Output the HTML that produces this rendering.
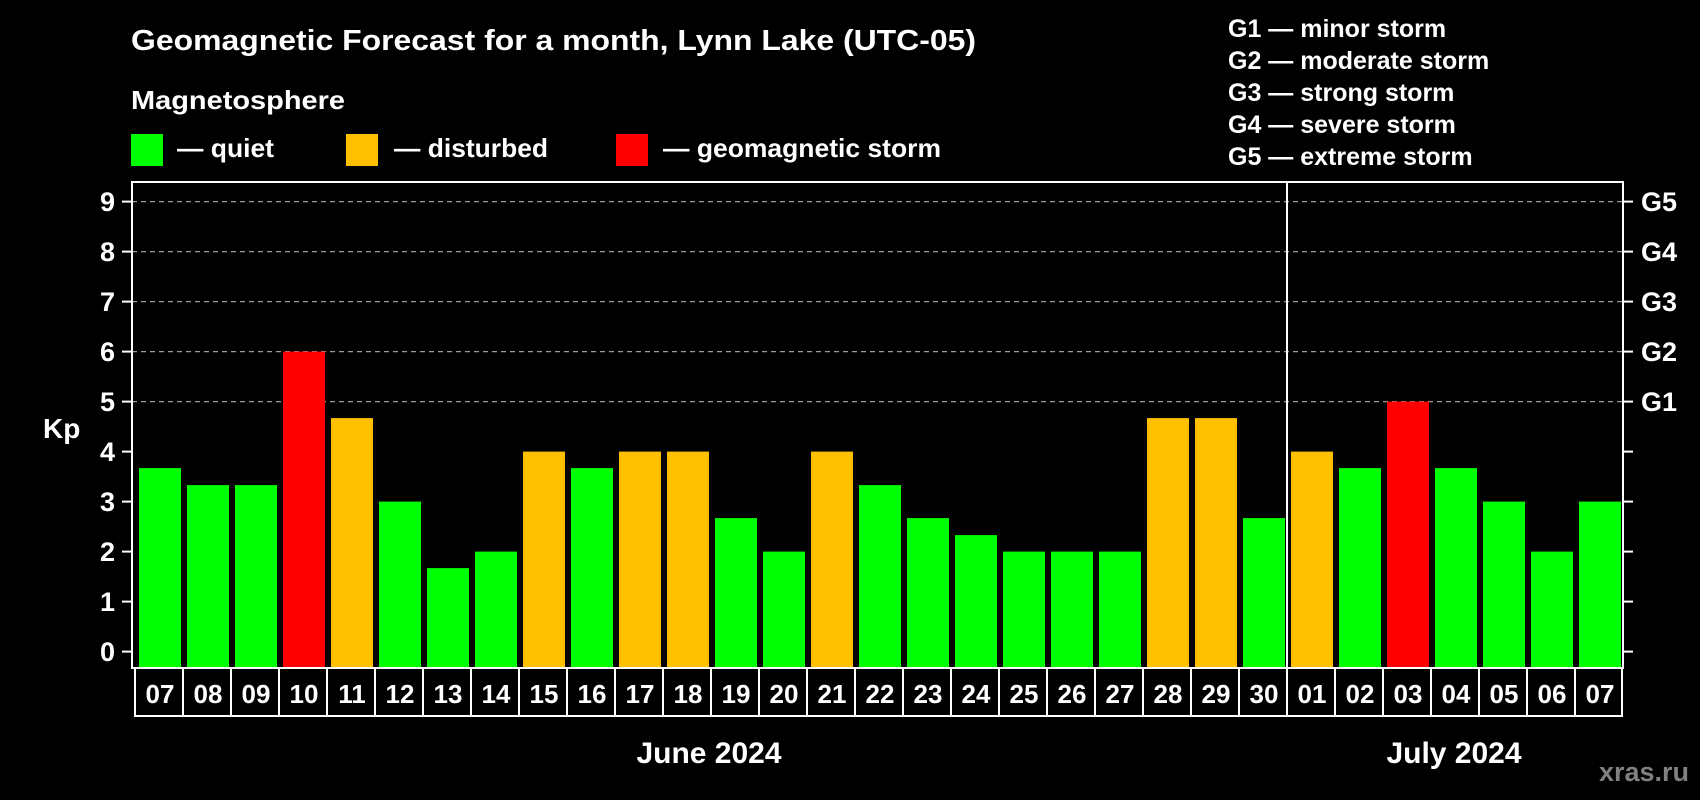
<!DOCTYPE html>
<html><head><meta charset="utf-8"><style>
html,body{margin:0;padding:0;background:#000;}
svg{display:block;font-family:"Liberation Sans",Arial,sans-serif;font-weight:bold;}
</style></head><body>
<svg width="1700" height="800" viewBox="0 0 1700 800" xmlns="http://www.w3.org/2000/svg">
<rect width="1700" height="800" fill="#000"/>
<text x="131" y="50" fill="#fff" font-size="29" textLength="845" lengthAdjust="spacingAndGlyphs">Geomagnetic Forecast for a month, Lynn Lake (UTC-05)</text>
<text x="131" y="109" fill="#fff" font-size="26" textLength="214" lengthAdjust="spacingAndGlyphs">Magnetosphere</text>
<rect x="131" y="134" width="32" height="32" fill="#00ff00"/>
<text x="177" y="157" fill="#fff" font-size="26" textLength="97" lengthAdjust="spacingAndGlyphs">— quiet</text>
<rect x="346" y="134" width="32" height="32" fill="#ffc000"/>
<text x="394" y="157" fill="#fff" font-size="26" textLength="154" lengthAdjust="spacingAndGlyphs">— disturbed</text>
<rect x="616" y="134" width="32" height="32" fill="#ff0000"/>
<text x="663" y="157" fill="#fff" font-size="26" textLength="278" lengthAdjust="spacingAndGlyphs">— geomagnetic storm</text>
<g fill="#fff" font-size="25">
<text x="1228" y="37">G1 — minor storm</text>
<text x="1228" y="69">G2 — moderate storm</text>
<text x="1228" y="101">G3 — strong storm</text>
<text x="1228" y="133">G4 — severe storm</text>
<text x="1228" y="165">G5 — extreme storm</text>
</g>
<g stroke="#999" stroke-width="1.2" stroke-dasharray="5,4">
<line x1="132" y1="201.6" x2="1623" y2="201.6"/>
<line x1="132" y1="251.6" x2="1623" y2="251.6"/>
<line x1="132" y1="301.6" x2="1623" y2="301.6"/>
<line x1="132" y1="351.6" x2="1623" y2="351.6"/>
<line x1="132" y1="401.6" x2="1623" y2="401.6"/>
</g>
<g>
<rect x="139" y="468.1" width="42" height="199.9" fill="#00ff00"/>
<rect x="187" y="485.1" width="42" height="182.9" fill="#00ff00"/>
<rect x="235" y="485.1" width="42" height="182.9" fill="#00ff00"/>
<rect x="283" y="351.6" width="42" height="316.4" fill="#ff0000"/>
<rect x="331" y="418.1" width="42" height="249.9" fill="#ffc000"/>
<rect x="379" y="501.6" width="42" height="166.4" fill="#00ff00"/>
<rect x="427" y="568.1" width="42" height="99.9" fill="#00ff00"/>
<rect x="475" y="551.6" width="42" height="116.4" fill="#00ff00"/>
<rect x="523" y="451.6" width="42" height="216.4" fill="#ffc000"/>
<rect x="571" y="468.1" width="42" height="199.9" fill="#00ff00"/>
<rect x="619" y="451.6" width="42" height="216.4" fill="#ffc000"/>
<rect x="667" y="451.6" width="42" height="216.4" fill="#ffc000"/>
<rect x="715" y="518.1" width="42" height="149.9" fill="#00ff00"/>
<rect x="763" y="551.6" width="42" height="116.4" fill="#00ff00"/>
<rect x="811" y="451.6" width="42" height="216.4" fill="#ffc000"/>
<rect x="859" y="485.1" width="42" height="182.9" fill="#00ff00"/>
<rect x="907" y="518.1" width="42" height="149.9" fill="#00ff00"/>
<rect x="955" y="535.1" width="42" height="132.9" fill="#00ff00"/>
<rect x="1003" y="551.6" width="42" height="116.4" fill="#00ff00"/>
<rect x="1051" y="551.6" width="42" height="116.4" fill="#00ff00"/>
<rect x="1099" y="551.6" width="42" height="116.4" fill="#00ff00"/>
<rect x="1147" y="418.1" width="42" height="249.9" fill="#ffc000"/>
<rect x="1195" y="418.1" width="42" height="249.9" fill="#ffc000"/>
<rect x="1243" y="518.1" width="42" height="149.9" fill="#00ff00"/>
<rect x="1291" y="451.6" width="42" height="216.4" fill="#ffc000"/>
<rect x="1339" y="468.1" width="42" height="199.9" fill="#00ff00"/>
<rect x="1387" y="401.6" width="42" height="266.4" fill="#ff0000"/>
<rect x="1435" y="468.1" width="42" height="199.9" fill="#00ff00"/>
<rect x="1483" y="501.6" width="42" height="166.4" fill="#00ff00"/>
<rect x="1531" y="551.6" width="42" height="116.4" fill="#00ff00"/>
<rect x="1579" y="501.6" width="42" height="166.4" fill="#00ff00"/>
</g>
<g fill="#fff" font-size="26" text-anchor="middle">
<text x="160" y="703">07</text><text x="208" y="703">08</text><text x="256" y="703">09</text><text x="304" y="703">10</text><text x="352" y="703">11</text><text x="400" y="703">12</text><text x="448" y="703">13</text><text x="496" y="703">14</text><text x="544" y="703">15</text><text x="592" y="703">16</text><text x="640" y="703">17</text><text x="688" y="703">18</text><text x="736" y="703">19</text><text x="784" y="703">20</text><text x="832" y="703">21</text><text x="880" y="703">22</text><text x="928" y="703">23</text><text x="976" y="703">24</text><text x="1024" y="703">25</text><text x="1072" y="703">26</text><text x="1120" y="703">27</text><text x="1168" y="703">28</text><text x="1216" y="703">29</text><text x="1264" y="703">30</text><text x="1312" y="703">01</text><text x="1360" y="703">02</text><text x="1408" y="703">03</text><text x="1456" y="703">04</text><text x="1504" y="703">05</text><text x="1552" y="703">06</text><text x="1600" y="703">07</text>
</g>
<g stroke="#fff" stroke-width="2">
<line x1="135" y1="669" x2="135" y2="716"/><line x1="183" y1="669" x2="183" y2="716"/><line x1="231" y1="669" x2="231" y2="716"/><line x1="279" y1="669" x2="279" y2="716"/><line x1="327" y1="669" x2="327" y2="716"/><line x1="375" y1="669" x2="375" y2="716"/><line x1="423" y1="669" x2="423" y2="716"/><line x1="471" y1="669" x2="471" y2="716"/><line x1="519" y1="669" x2="519" y2="716"/><line x1="567" y1="669" x2="567" y2="716"/><line x1="615" y1="669" x2="615" y2="716"/><line x1="663" y1="669" x2="663" y2="716"/><line x1="711" y1="669" x2="711" y2="716"/><line x1="759" y1="669" x2="759" y2="716"/><line x1="807" y1="669" x2="807" y2="716"/><line x1="855" y1="669" x2="855" y2="716"/><line x1="903" y1="669" x2="903" y2="716"/><line x1="951" y1="669" x2="951" y2="716"/><line x1="999" y1="669" x2="999" y2="716"/><line x1="1047" y1="669" x2="1047" y2="716"/><line x1="1095" y1="669" x2="1095" y2="716"/><line x1="1143" y1="669" x2="1143" y2="716"/><line x1="1191" y1="669" x2="1191" y2="716"/><line x1="1239" y1="669" x2="1239" y2="716"/><line x1="1287" y1="669" x2="1287" y2="716"/><line x1="1335" y1="669" x2="1335" y2="716"/><line x1="1383" y1="669" x2="1383" y2="716"/><line x1="1431" y1="669" x2="1431" y2="716"/><line x1="1479" y1="669" x2="1479" y2="716"/><line x1="1527" y1="669" x2="1527" y2="716"/><line x1="1575" y1="669" x2="1575" y2="716"/><line x1="1622" y1="669" x2="1622" y2="716"/>
<line x1="134" y1="716" x2="1623" y2="716"/>
</g>
<rect x="132" y="182" width="1491" height="486" fill="none" stroke="#fff" stroke-width="2"/>
<line x1="1287" y1="182" x2="1287" y2="668" stroke="#fff" stroke-width="2"/>
<g stroke="#fff" stroke-width="2">
<line x1="122" y1="201.6" x2="131" y2="201.6"/><line x1="122" y1="251.6" x2="131" y2="251.6"/><line x1="122" y1="301.6" x2="131" y2="301.6"/><line x1="122" y1="351.6" x2="131" y2="351.6"/><line x1="122" y1="401.6" x2="131" y2="401.6"/><line x1="122" y1="451.6" x2="131" y2="451.6"/><line x1="122" y1="501.6" x2="131" y2="501.6"/><line x1="122" y1="551.6" x2="131" y2="551.6"/><line x1="122" y1="601.6" x2="131" y2="601.6"/><line x1="122" y1="651.6" x2="131" y2="651.6"/>
<line x1="1624" y1="201.6" x2="1633" y2="201.6"/><line x1="1624" y1="251.6" x2="1633" y2="251.6"/><line x1="1624" y1="301.6" x2="1633" y2="301.6"/><line x1="1624" y1="351.6" x2="1633" y2="351.6"/><line x1="1624" y1="401.6" x2="1633" y2="401.6"/><line x1="1624" y1="451.6" x2="1633" y2="451.6"/><line x1="1624" y1="501.6" x2="1633" y2="501.6"/><line x1="1624" y1="551.6" x2="1633" y2="551.6"/><line x1="1624" y1="601.6" x2="1633" y2="601.6"/><line x1="1624" y1="651.6" x2="1633" y2="651.6"/>
</g>
<g fill="#fff" font-size="27" text-anchor="end">
<text x="115" y="211">9</text><text x="115" y="261">8</text><text x="115" y="311">7</text><text x="115" y="361">6</text><text x="115" y="411">5</text><text x="115" y="461">4</text><text x="115" y="511">3</text><text x="115" y="561">2</text><text x="115" y="611">1</text><text x="115" y="661">0</text>
</g>
<g fill="#fff" font-size="27">
<text x="1641" y="211">G5</text><text x="1641" y="261">G4</text><text x="1641" y="311">G3</text><text x="1641" y="361">G2</text><text x="1641" y="411">G1</text>
</g>
<text x="43" y="438" fill="#fff" font-size="28">Kp</text>
<text x="709" y="763" fill="#fff" font-size="30" text-anchor="middle">June 2024</text>
<text x="1454" y="763" fill="#fff" font-size="30" text-anchor="middle">July 2024</text>
<text x="1689" y="781" fill="#808080" font-size="27" text-anchor="end">xras.ru</text>
</svg>
</body></html>
